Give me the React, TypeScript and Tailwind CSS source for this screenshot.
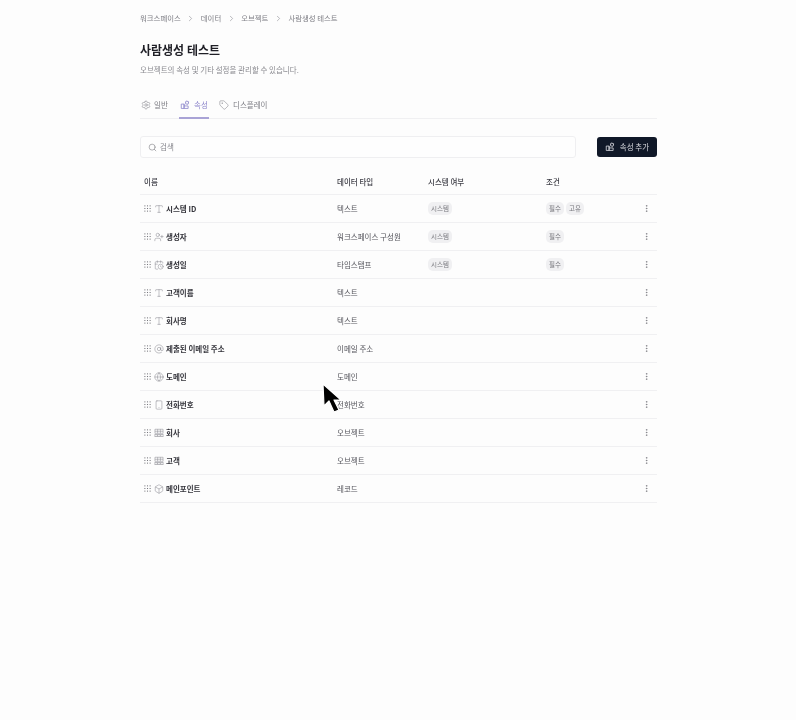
import React from "react";
import { ChevronRight, Settings, Tag, Search, Type, UserPlus, CalendarClock, AtSign, Globe, Smartphone, Box, MoreVertical } from "lucide-react";

function PropIcon({ className = "" }: { className?: string }) {
  return (
    <svg viewBox="0 0 16 16" fill="none" stroke="currentColor" strokeWidth="1.3" className={className}>
      <path d="M2 6.5h4.5v7H2zM6.5 9.5H13v4H6.5zM6.5 6.5V9.5" />
      <rect x="9" y="2" width="4.5" height="4.5" rx="0.5" transform="rotate(12 11 4)" />
    </svg>
  );
}

function Dots() {
  return (
    <svg viewBox="0 0 8 8" className="w-[7px] h-[7px] text-[#77777d] shrink-0" fill="currentColor">
      {[1, 4, 7].map((x) => [1, 4, 7].map((y) => <rect key={`${x}${y}`} x={x - 0.6} y={y - 0.6} width="1.2" height="1.2" />))}
    </svg>
  );
}

function CompanyIcon({ className = "" }: { className?: string }) {
  return (
    <svg viewBox="0 0 16 16" fill="none" stroke="currentColor" strokeWidth="0.8" className={className}>
      <path d="M1.5 2h13v6.5h-13zM1.5 5.2h13M5.8 2v6.5M10.2 2v6.5" />
      <rect x="1.5" y="10.5" width="3.5" height="3.5" />
      <rect x="6.2" y="10.5" width="3.5" height="3.5" />
      <rect x="11" y="10.5" width="3.5" height="3.5" />
    </svg>
  );
}

type Row = { name: string; type: string; Icon: any; sys?: boolean; cond?: string[] };
const rows: Row[] = [
  { name: "시스템 ID", type: "텍스트", Icon: Type, sys: true, cond: ["필수", "고유"] },
  { name: "생성자", type: "워크스페이스 구성원", Icon: UserPlus, sys: true, cond: ["필수"] },
  { name: "생성일", type: "타임스탬프", Icon: CalendarClock, sys: true, cond: ["필수"] },
  { name: "고객이름", type: "텍스트", Icon: Type },
  { name: "회사명", type: "텍스트", Icon: Type },
  { name: "제출된 이메일 주소", type: "이메일 주소", Icon: AtSign },
  { name: "도메인", type: "도메인", Icon: Globe },
  { name: "전화번호", type: "전화번호", Icon: Smartphone },
  { name: "회사", type: "오브젝트", Icon: CompanyIcon },
  { name: "고객", type: "오브젝트", Icon: CompanyIcon },
  { name: "메인포인트", type: "레코드", Icon: Box },
];

function Badge({ t }: { t: string }) {
  return <span className="h-[13px] px-[3px] rounded-[5px] bg-[#f0f0f2] text-[#77777d] text-[6.5px] flex items-center">{t}</span>;
}

export default function App() {
  const crumbs = ["워크스페이스", "데이터", "오브젝트", "사람생성 테스트"];
  return (
    <div
      className="relative w-[796px] h-[720px] overflow-hidden bg-[#fdfdfd] text-[#23232a]"
      style={{ fontFamily: '"Noto Sans CJK KR", "Noto Sans", sans-serif' }}
    >
      <div className="w-[517px] ml-[140px] pt-[13px] blur-[0.5px]">
        <nav className="flex items-center h-[10px] text-[7.4px] text-[#7d7d84]">
          {crumbs.map((c, i) => (
            <React.Fragment key={c}>
              {i > 0 && <ChevronRight className="w-[9px] h-[9px] mx-[5.5px] text-[#85858c]" strokeWidth={1.5} />}
              <span>{c}</span>
            </React.Fragment>
          ))}
        </nav>

        <h1 className="mt-[17px] h-[20px] leading-[20px] text-[12px] font-bold text-[#1f1f26]">사람생성 테스트</h1>
        <p className="mt-[4px] h-[11px] leading-[11px] text-[7.5px] text-[#8a8a90]">오브젝트의 속성 및 기타 설정을 관리할 수 있습니다.</p>

        <div className="mt-[23px] h-[21px] flex border-b border-[#f0f0f2] text-[7.5px] text-[#7d7d84]">
          <div className="flex items-start gap-[3px] pt-[1px] w-[39px] pl-[1px]">
            <Settings className="w-[10px] h-[10px] mt-[1px]" strokeWidth={1.3} />
            <span>일반</span>
          </div>
          <div className="flex items-start gap-[4px] pt-[1px] w-[30px] h-[21px] justify-center border-b-2 border-[#a9a3d6] text-[#8d86cb]">
            <PropIcon className="w-[10px] h-[10px] mt-[1px]" />
            <span>속성</span>
          </div>
          <div className="flex items-start gap-[4px] pt-[1px] ml-[10px]">
            <Tag className="w-[10px] h-[10px] mt-[1px]" strokeWidth={1.3} />
            <span>디스플레이</span>
          </div>
        </div>

        <div className="mt-[17px] flex items-center justify-between">
          <div className="w-[436px] h-[22px] rounded-[3px] border border-[#efeff1] bg-[#fefefe] flex items-center pl-[7px] gap-[3px] text-[7.5px] text-[#85858c]">
            <Search className="w-[9px] h-[9px] text-[#77777d]" strokeWidth={1.5} />
            <span>검색</span>
          </div>
          <button className="w-[60px] h-[20px] rounded-[3px] bg-[#101828] text-[#d9dae0] text-[7.5px] flex items-center justify-center gap-[5px]">
            <PropIcon className="w-[10px] h-[10px]" />
            <span>속성 추가</span>
          </button>
        </div>

        <div className="mt-[16px] h-[21px] grid grid-cols-[197px_91px_118px_1fr] items-center border-b border-[#f0f0f2] text-[7.5px] font-medium text-[#3d3d45] pl-[4px] pb-[4px]">
          <span>이름</span>
          <span className="ml-[-4px]">데이터 타입</span>
          <span className="ml-[-4px]">시스템 여부</span>
          <span className="ml-[-4px]">조건</span>
        </div>

        {rows.map((r) => (
          <div key={r.name} className="h-[28px] grid grid-cols-[197px_91px_118px_1fr] items-center border-b border-[#f0f0f2] text-[7.5px] pl-[4px]">
            <div className="flex items-center">
              <Dots />
              <r.Icon className="w-[10px] h-[10px] ml-[3px] text-[#85858c] shrink-0" strokeWidth={1.2} />
              <span className="font-semibold text-[#33333a] ml-[2px]">{r.name}</span>
            </div>
            <span className="ml-[-4px] text-[#55555c]">{r.type}</span>
            <div className="ml-[-4px]">{r.sys && <span className="inline-flex"><Badge t="시스템" /></span>}</div>
            <div className="ml-[-4px] flex items-center justify-between">
              <div className="flex gap-[2px]">{r.cond?.map((c) => <Badge key={c} t={c} />)}</div>
              <MoreVertical className="w-[9px] h-[9px] text-[#66666c] mr-[6px]" strokeWidth={1.5} />
            </div>
          </div>
        ))}
      </div>

      <svg viewBox="0 0 24 34" className="absolute left-[321px] top-[382px] w-[24px] h-[34px]">
        <path d="M2 2L3 24L8 19L13 30L18 28L13 18L20 18Z" fill="#000" stroke="#fff" strokeWidth="1.2" strokeLinejoin="round" />
      </svg>
    </div>
  );
}
